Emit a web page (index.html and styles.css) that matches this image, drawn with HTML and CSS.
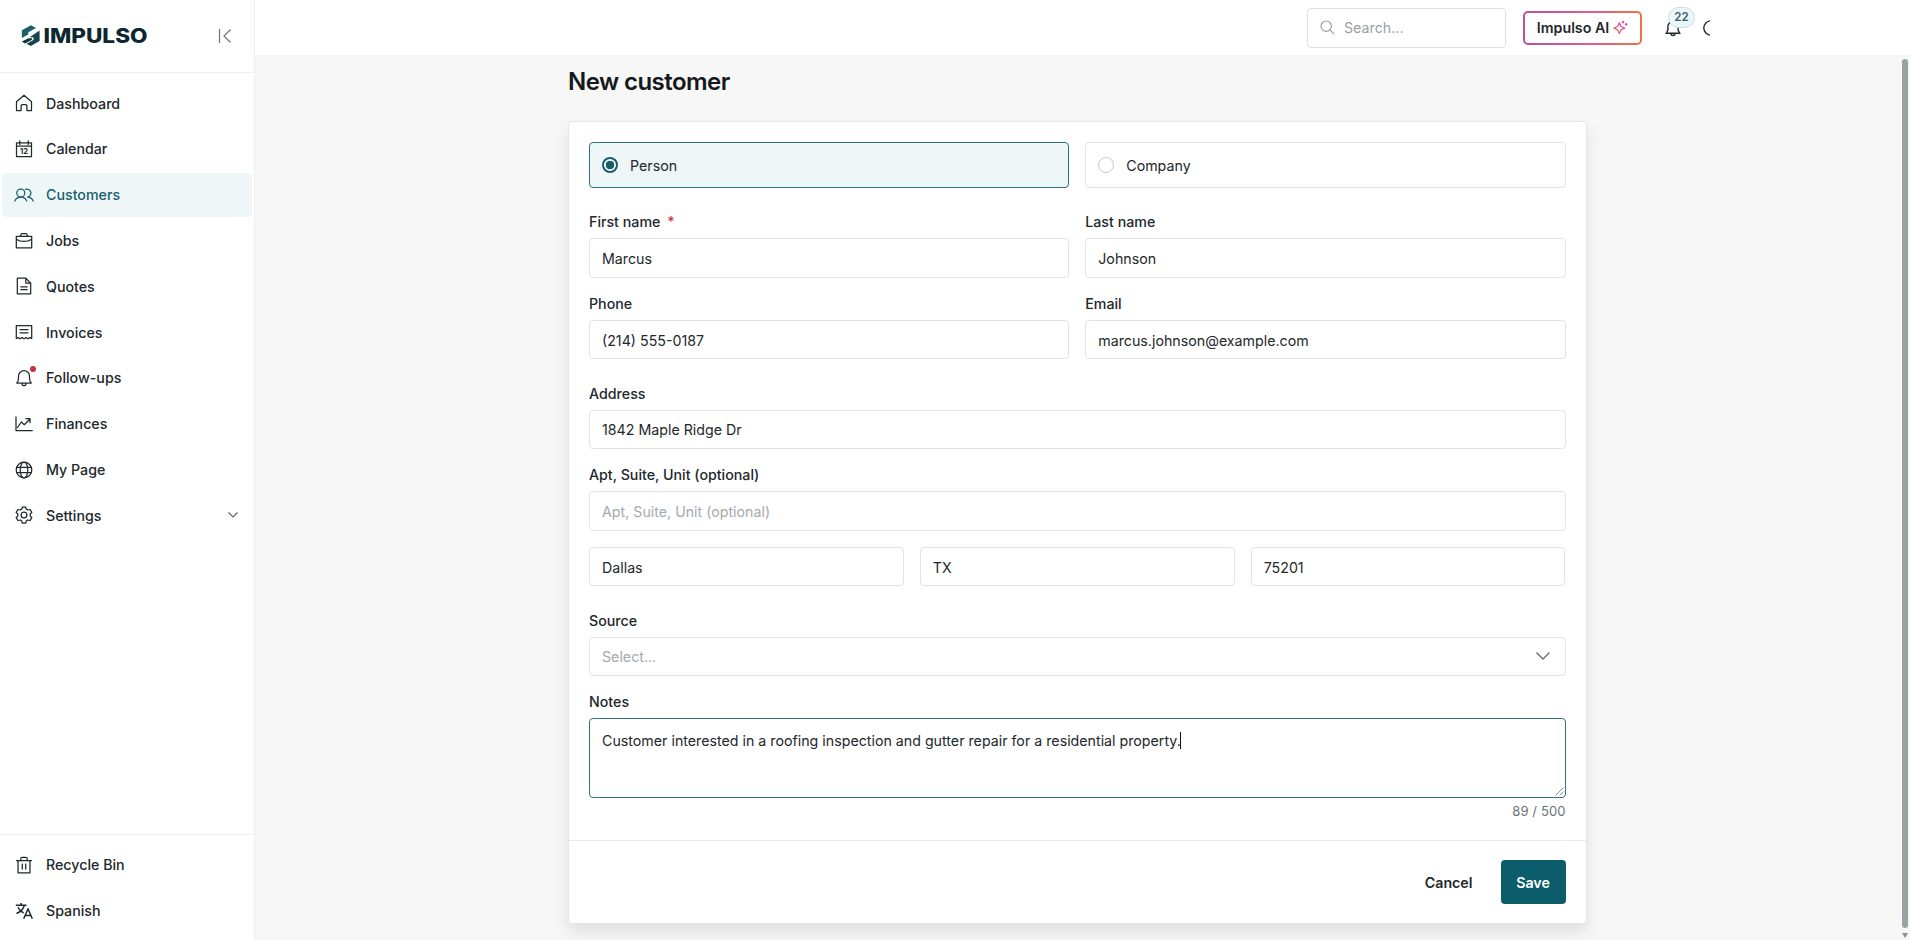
FILE: index.html
```html
<!DOCTYPE html>
<html lang="en">
<head>
<meta charset="utf-8">
<title>New customer - Impulso</title>
<link rel="stylesheet" href="styles.css">
</head>
<body>
<div class="app">
  <aside class="sidebar">
    <div class="brand">
      <svg class="logo" viewBox="0 0 128 24" width="128" height="24">
        <path d="M11 1.200 16 4 8.300 8.200V10.600L1.800 14V6.300Z" fill="#17616a"/>
        <path d="M19.600 6.600V16.900L10.800 22 6.500 19.700 13.500 16V13.300H9.500Z" fill="#17434e"/>
        <path d="M8.500 14.200 1.800 17.600 5 19.400 12 15.700V14.200Z" fill="#12323d"/>
        <text class="logo-text" x="23.500" y="19.200" textLength="104" lengthAdjust="spacingAndGlyphs">IMPULSO</text>
      </svg>
      <svg class="collapse" viewBox="0 0 14 16" width="14" height="16"><path d="M1.500 1v14M12.500 1.500 6 8l6.500 6.500"/></svg>
    </div>
    <nav class="nav">
      <a class="item"><svg class="ico" viewBox="0 0 18 18"><path d="M1.500 7.800 9 1.300l7.500 6.500v8.700h-4.600v-5a1 1 0 0 0-1-1H7.100a1 1 0 0 0-1 1v5H1.500Z"/></svg>Dashboard</a>
      <a class="item"><svg class="ico" viewBox="0 0 18 18"><path d="M1.500 2.800h15v13.700h-15ZM1.500 6h15M4.800.8v3.600M13.200.8v3.600"/><text class="cal-num" x="9" y="14.300">12</text></svg>Calendar</a>
      <a class="item active"><svg class="ico wide" viewBox="0 0 20 18"><circle cx="6.800" cy="7" r="4"/><path d="M.8 15c1-2.600 3.200-4 6-4s5 1.400 6 4M11.500 3.300a4 4 0 1 1 2 7.700c2.800 0 4.700 1.400 5.700 4"/></svg>Customers</a>
      <a class="item"><svg class="ico" viewBox="0 0 18 18"><path d="M1.300 4.300h15.400v11.500H1.300ZM5.800 4.200V2.800c0-.8.500-1.300 1.300-1.300h3.800c.8 0 1.300.5 1.300 1.300v1.400M1.300 7.300c4.600 2.900 10.800 2.900 15.400 0M7.800 9.300h2.400"/></svg>Jobs</a>
      <a class="item"><svg class="ico" viewBox="0 0 18 18"><path d="M2.300 1.200h8.500l4.900 4.900v10.700H2.300ZM10.800 1.200v4.900h4.900M5.800 9.800h6.400M5.800 12.600h6.400"/></svg>Quotes</a>
      <a class="item"><svg class="ico" viewBox="0 0 18 18"><path d="M1.300 2.500h15.400v13l-1.600-.9-2 1.200-2-1.200-2.100 1.200-2.100-1.200-2 1.200-2-1.200-1.600.9ZM5 6.500h8M5 9.800h8"/></svg>Invoices</a>
      <a class="item"><span class="icon-wrap"><svg class="ico" viewBox="0 0 18 18"><path d="M1.800 14c1.300-1.400 1.700-2.900 1.700-5V7.200a5.500 5.500 0 0 1 11 0V9c0 2.100.4 3.600 1.700 5ZM7 14.500c0 1.300.8 2.200 2 2.200s2-.9 2-2.200"/></svg><i class="dot"></i></span>Follow-ups</a>
      <a class="item"><svg class="ico" viewBox="0 0 18 18"><path d="M1 1.800v13.700h16.300M2.500 12.500 6.300 7l3 2.700 5.400-5.500M11 3.700h4v4"/></svg>Finances</a>
      <a class="item"><svg class="ico" viewBox="0 0 18 18"><circle cx="9" cy="9" r="7.800"/><ellipse cx="9" cy="9" rx="3.800" ry="7.800"/><path d="M1.700 6.300h14.600M1.700 11.700h14.600"/></svg>My Page</a>
      <a class="item"><svg class="ico" viewBox="0 0 18 18"><circle cx="9" cy="9" r="2.900"/><path d="M7.300 1h3.400l.7 2.200 1.400.8 2.300-.5 1.700 2.900L15.200 8v2l1.600 1.600-1.700 2.900-2.300-.5-1.400.8-.7 2.200H7.300l-.7-2.200-1.400-.8-2.300.5-1.700-2.900L2.800 10V8L1.200 6.400l1.700-2.900 2.300.5 1.400-.8Z"/></svg>Settings<svg class="chev" viewBox="0 0 12 8" width="12" height="8"><path d="M1.500 1.500 6 6l4.500-4.500"/></svg></a>
    </nav>
    <div class="side-foot">
      <a class="item"><svg class="ico" viewBox="0 0 18 18"><path d="M1.500 4.500h15M3 4.500h12v12.300H3ZM5.800 4.300V2.700c0-.9.500-1.400 1.300-1.400h3.800c.8 0 1.300.5 1.300 1.400v1.600M7.300 8v5M10.700 8v5"/></svg>Recycle Bin</a>
      <a class="item"><svg class="ico bold" viewBox="0 0 18 18"><path d="M.8 3.300h10.700M6.100 1v2.300M9.300 3.500C8.300 7 5.500 9.800 1.500 11.500M3 5.300c1.200 2.700 3 4.500 5.600 5.700M8.700 16.700 13 6.800l4.300 9.900M10.200 13.400h5.600"/></svg>Spanish</a>
    </div>
  </aside>
  <div class="page">
    <header class="topbar">
      <div class="search"><svg class="mag" viewBox="0 0 15 15" width="15" height="15"><circle cx="6.200" cy="6.200" r="5.200"/><path d="m10 10 4.200 4.200"/></svg>Search...</div>
      <button class="ai">Impulso AI<svg viewBox="0 0 15 15" width="15" height="15">
        <defs><linearGradient id="spark" x1="0" y1="1" x2="1" y2="0"><stop offset="0" stop-color="#f0704a"/><stop offset=".6" stop-color="#d851a0"/><stop offset="1" stop-color="#b04ab8"/></linearGradient></defs>
        <path d="M6.300 2.800 8 6.500l3.700 1.700L8 9.900l-1.700 3.700-1.700-3.700L.9 8.200l3.700-1.700ZM10 .8v2.600M8.800 2.100h2.500M13.200 3v2.600M12 4.300h2.500" fill="none" stroke="url(#spark)" stroke-width="1.300" stroke-linejoin="round"/></svg></button>
      <div class="bell"><svg viewBox="0 0 16 17" width="16" height="17"><path d="M1.300 13.200 2.900 10V6.500a5.100 5.100 0 0 1 10.200 0V10l1.600 3.200ZM6 13.500c0 1.200.8 2 2 2s2-.8 2-2"/></svg><span class="badge">22</span></div>
      <svg class="help" viewBox="0 0 16 16" width="16" height="16"><circle cx="8" cy="8" r="7.200"/></svg>
    </header>
    <div class="body">
      <main class="content">
        <h1 class="title">New customer</h1>
        <form class="card">
          <div class="fields">
            <div class="row types">
              <label class="type selected"><span class="radio"></span>Person</label>
              <label class="type"><span class="radio"></span>Company</label>
            </div>
            <section class="group">
              <div class="row">
                <div class="field"><span class="label">First name<b class="req">*</b></span><div class="input">Marcus</div></div>
                <div class="field"><span class="label">Last name</span><div class="input">Johnson</div></div>
              </div>
              <div class="row">
                <div class="field"><span class="label">Phone</span><div class="input">(214) 555-0187</div></div>
                <div class="field"><span class="label">Email</span><div class="input">marcus.johnson@example.com</div></div>
              </div>
            </section>
            <section class="group">
              <div class="field"><span class="label">Address</span><div class="input">1842 Maple Ridge Dr</div></div>
              <div class="field"><span class="label">Apt, Suite, Unit (optional)</span><div class="input empty">Apt, Suite, Unit (optional)</div></div>
              <div class="row">
                <div class="input">Dallas</div>
                <div class="input">TX</div>
                <div class="input">75201</div>
              </div>
            </section>
            <section class="group">
              <div class="field"><span class="label">Source</span><div class="input select empty">Select...<svg viewBox="0 0 16 10" width="16" height="10"><path d="M1.500 1.500 8 8l6.500-6.500"/></svg></div></div>
              <div class="field">
                <span class="label">Notes</span>
                <div class="notes">Customer interested in a roofing inspection and gutter repair for a residential property.<i class="caret"></i><svg class="grip" viewBox="0 0 9 9" width="9" height="9"><path d="M.5 8.500l8-8M4.500 8.500l4-4"/></svg></div>
                <span class="count">89 / 500</span>
              </div>
            </section>
          </div>
          <footer class="actions"><button class="cancel" type="button">Cancel</button><button class="save" type="button">Save</button></footer>
        </form>
      </main>
      <div class="scrollbar"><div class="thumb"></div><div class="arrow"></div></div>
    </div>
  </div>
</div>
</body>
</html>
```
FILE: styles.css
```css
* { box-sizing: border-box; }
body {
  margin: 0;
  font-family: Inter, "Liberation Sans", sans-serif;
  font-size: 14.220px;
  color: #22282b;
  background: #fff;
}
button { font: inherit; color: inherit; background: none; border: 0; padding: 0; }
svg { flex: none; fill: none; stroke: currentColor; }
.app { display: flex; width: 100%; height: 940px; overflow: hidden; }

.sidebar { display: flex; flex-direction: column; width: 255px; flex: none; border-right: 1px solid #efefef; }
.brand { display: flex; align-items: center; justify-content: space-between; height: 73px; padding: 0 22px 0 20px; border-bottom: 1px solid #efefef; }
.logo { stroke: none; }
.logo-text { font-weight: 800; font-size: 20px; fill: #0c2730; }
.collapse { stroke: #6f7477; stroke-width: 1.2; }
.nav { display: flex; flex-direction: column; gap: 1.800px; padding: 8.200px 2px 0; }
.item { display: flex; align-items: center; gap: 13px; height: 44px; padding: 0 13px; border-radius: 4px; font-weight: 500; }
.item.active { background: #eff6f8; color: #165f6b; }
.ico { width: 18px; height: 18px; stroke-width: 1.250; stroke-linejoin: round; stroke-linecap: round; }
.ico.wide { width: 20px; margin: 0 -1px; }
.ico.bold { stroke-width: 1.500; stroke-linecap: butt; }
.cal-num { font-size: 7.500px; font-weight: 700; text-anchor: middle; fill: currentColor; stroke: none; }
.icon-wrap { position: relative; display: flex; }
.dot { position: absolute; top: -3px; right: -3px; width: 6px; height: 6px; border-radius: 50%; background: #c9303e; }
.chev { margin-left: auto; stroke: #5d6366; stroke-width: 1.200; }
.side-foot { display: flex; flex-direction: column; gap: 1.800px; margin-top: auto; padding: 8px 2px 7.400px; border-top: 1px solid #efefef; }

.page { display: flex; flex-direction: column; flex: 1; min-width: 0; }
.topbar { display: flex; align-items: center; justify-content: flex-start; height: 55px; margin-right: 200px; padding-left: 1052px; overflow: hidden; }
.search { display: flex; align-items: center; gap: 9px; flex: none; width: 199px; height: 40px; padding: 0 12px; border: 1px solid #dfe1e2; border-radius: 4px; color: #9b9fa2; }
.mag { stroke: #9b9fa2; stroke-width: 1.200; }
.ai { display: flex; align-items: center; justify-content: center; gap: 4px; flex: none; width: 119px; height: 34px; margin-left: 17px; border: 2px solid transparent; border-radius: 5px; background: linear-gradient(#fff, #fff) padding-box, linear-gradient(90deg, #b9519f, #d95c93 50%, #ec7444) border-box; font-weight: 600; }
.bell { position: relative; display: flex; flex: none; margin: 2px 0 0 23px; stroke-width: 1.400; }
.badge { position: absolute; left: 3px; top: -13.500px; display: flex; align-items: center; justify-content: center; width: 27px; height: 21px; border: 1px solid #c3dfe6; border-radius: 11px; background: #ebf6f9; color: #3c5f69; font-size: 11.500px; font-weight: 600; }
.help { margin-left: 22px; stroke-width: 1.400; }

.body { display: flex; flex: 1; min-height: 0; background: #f7f7f7; }
.content { display: flex; flex-direction: column; width: 1018.500px; margin-left: 313px; padding-top: 11px; }
.title { margin: 0; height: 55px; font-size: 24px; line-height: 31px; font-weight: 600; letter-spacing: -0.550px; color: #15191b; }
.card { display: flex; flex-direction: column; height: 803px; flex: none; background: #fff; border: 1px solid #e4e5e6; border-radius: 4px; box-shadow: 0 8px 16px rgba(0, 0, 0, .1); }
.fields { display: flex; flex-direction: column; gap: 24.200px; height: 717.500px; padding: 20px; }
.group { display: flex; flex-direction: column; gap: 16px; }
.row { display: flex; gap: 16px; }
.row > * { flex: 1; min-width: 0; }
.field { display: flex; flex-direction: column; }
.label { height: 26px; line-height: 20px; font-weight: 500; }
.req { margin-left: 7px; font-weight: 500; color: #c9303e; }
.type { display: flex; align-items: center; gap: 12px; height: 46px; padding: 0 12px; border: 1px solid #e1e3e4; border-radius: 4px; }
.type.selected { border-color: #2a737d; background: #eff6f8; }
.radio { width: 16px; height: 16px; border: 1px solid #c6c9cb; border-radius: 50%; background: #fff; }
.selected .radio { border: 2px solid #155f6b; background: radial-gradient(circle, #155f6b 4px, #fff 4.600px); }
.input { display: flex; align-items: center; height: 39.600px; padding: 1px 12px 0; border: 1px solid #e1e3e4; border-radius: 4px; white-space: nowrap; }
.input.empty { color: #a6a9ab; }
.select { justify-content: space-between; padding: 0 14px 0 12px; }
.select svg { stroke: #686d70; stroke-width: 1.400; }
.notes { position: relative; height: 79.500px; padding: 12px; line-height: 20px; border: 1px solid #33767f; border-radius: 4px; }
.caret { display: inline-block; width: 1px; height: 17px; margin-left: -1px; vertical-align: -3px; background: #111; }
.grip { position: absolute; right: 1px; bottom: 1px; stroke: #6b7073; stroke-width: .8; }
.count { align-self: flex-end; margin-top: 3px; line-height: 20px; font-size: 13px; letter-spacing: .1px; color: #6c7275; }
.actions { display: flex; flex: 1; align-items: flex-start; justify-content: flex-end; gap: 28px; padding: 19.500px 20px; border-top: 1px solid #e8e9ea; font-weight: 600; }
.cancel { height: 44px; }
.save { width: 65px; height: 44px; border-radius: 4px; background: #0b5d6b; color: #fff; }
.scrollbar { display: flex; flex-direction: column; align-items: center; gap: 5px; margin-left: auto; width: 10px; padding: 4px 1px 0 0; }
.thumb { width: 6px; height: 869px; border-radius: 3px; background: #98a2a4; }
.arrow { border: 3px solid transparent; border-top: 5px solid #8a9092; border-bottom: 0; }
```
